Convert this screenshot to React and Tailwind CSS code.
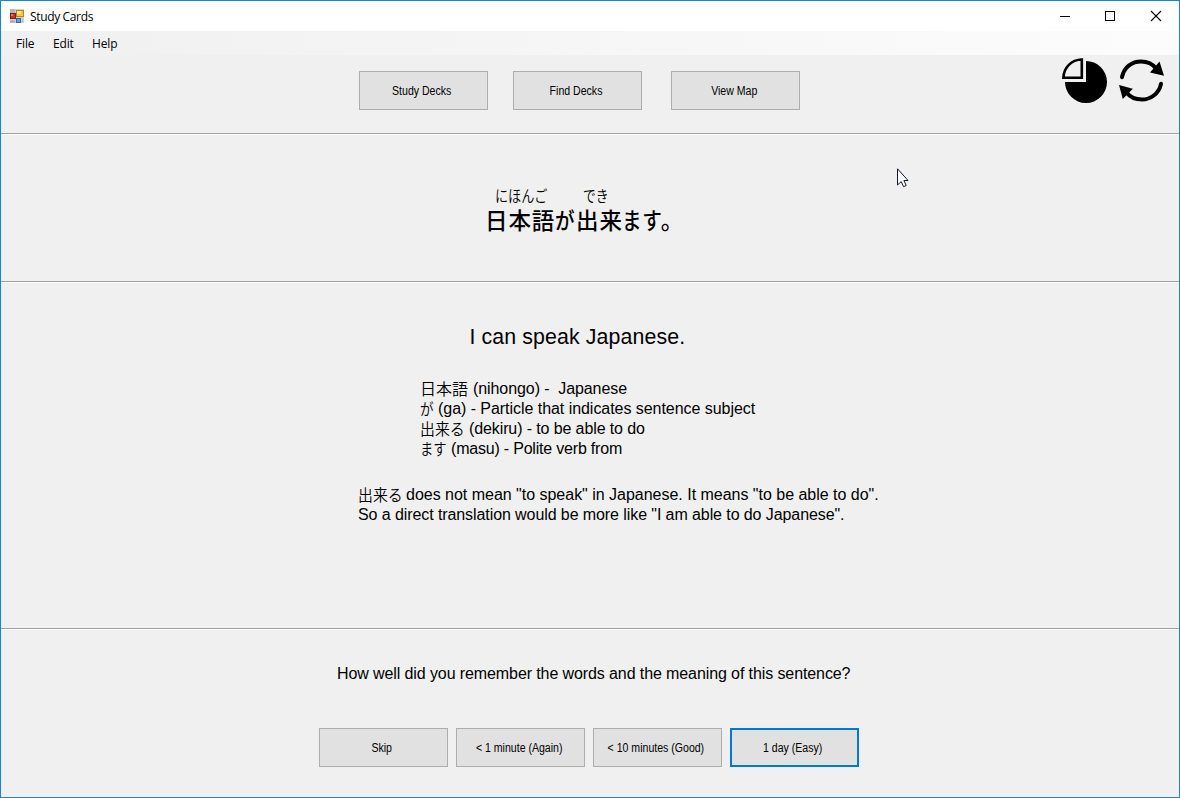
const SANS = "font-['Liberation_Sans','Noto_Sans_CJK_JP',sans-serif]";
const JP = "font-['Noto_Sans_CJK_JP','Liberation_Sans',sans-serif]";

function AppIcon() {
  return (
    <svg width="14" height="14" viewBox="0 0 14 14" className="shrink-0">
      <rect width="14" height="14" fill="#d0d0d0" />
      <path d="M0 4V0H5V4M0 11H5V14H0ZM13 9V13H12" fill="#b4b4b4" />
      <rect x="0.5" y="4.5" width="5" height="5" fill="#c8342c" stroke="#8d1712" />
      <rect x="1" y="5" width="2" height="2" fill="#e57368" />
      <rect x="6.5" y="1.5" width="7" height="6" fill="#f8c83c" stroke="#b8860f" />
      <rect x="7" y="2" width="4" height="3" fill="#ffe793" />
      <rect x="6.5" y="9.5" width="4" height="4" fill="#6d9ae0" stroke="#3565b5" />
    </svg>
  );
}

function TitleBar() {
  return (
    <header className="flex h-[30px] shrink-0 items-center bg-white pl-[9px]">
      <AppIcon />
      <span className="ml-[6px] whitespace-nowrap pt-[2px] font-['Open_Sans',sans-serif] text-[12px] leading-[16px] tracking-[-0.35px] text-black">
        Study Cards
      </span>
      <svg width="104" height="12" viewBox="0 0 104 12" fill="none" stroke="#000" className="ml-auto mr-[16px]" shapeRendering="crispEdges">
        <path d="M1 6.5H11" />
        <rect x="46.5" y="1.5" width="9" height="9" />
        <path d="M92 1L102 11M102 1L92 11" shapeRendering="auto" strokeWidth="1.1" />
      </svg>
    </header>
  );
}

function MenuBar() {
  return (
    <nav className="flex h-6 shrink-0 items-center bg-linear-to-r from-[#f0f0f0] to-[#fcfcfc] pl-[15px] pt-[2px] font-['Open_Sans',sans-serif] text-[12px] tracking-[-0.15px] text-black">
      <span className="w-[37px]">File</span>
      <span className="w-[39px]">Edit</span>
      <span>Help</span>
    </nav>
  );
}

function Button({ children, focused, className = "" }) {
  return (
    <button
      className={`flex h-[39px] w-[129px] shrink-0 items-center justify-center whitespace-pre bg-[#e1e1e1] pr-[3px] pt-px text-[12px] ${SANS} text-black ${
        focused ? "border-2 border-[#0078d7]" : "border border-[#adadad]"
      } ${className}`}
    >
      <span className="block scale-x-[0.88]">{children}</span>
    </button>
  );
}

function PieIcon() {
  return (
    <svg width="46" height="46" viewBox="0 0 46 46">
      <path d="M24 3V24H3A21 21 0 1 0 24 3Z" fill="#000" />
      <path d="M21.8 0V21.8H0Z" fill="#f0f0f0" />
      <path d="M19.8 1.5V19.8H1.4C1.7 9.5 9.5 1.7 19.8 1.5Z" fill="#f0f0f0" stroke="#000" strokeWidth="2.6" />
    </svg>
  );
}

function RefreshIcon() {
  return (
    <svg width="46" height="46" viewBox="0 0 46 46" fill="none" stroke="#000" strokeWidth="4" strokeLinecap="round">
      <path d="M4 19.2C6 8.5 14.5 3.4 23 3.4C30 3.4 35 6.2 38 10.5" />
      <path d="M43 25.8C41 36 32 41.5 24 41.5C17 41.5 12 39 8.5 34.5" />
      <path d="M41.5 3.5L46 17.8L32 14.6ZM1 27L14.8 30.7L4.8 41Z" fill="#000" stroke="none" />
    </svg>
  );
}

function Cursor() {
  return (
    <svg width="13" height="20" viewBox="0 0 13 20" className="absolute left-[895px] top-[34px]">
      <path d="M1.5 .8V17L5.2 13.6L7.6 18.7L10.2 17.5L7.9 12.5H12Z" fill="#fff" stroke="#111827" strokeWidth="1" />
    </svg>
  );
}

function Word({ jp, w, scale, children, spacing }) {
  return (
    <div className="flex h-5 items-center whitespace-pre text-base leading-5">
      <span className={`flex h-5 shrink-0 items-center pb-[3px] leading-4 ${w}`}>
        <span className={`block origin-left font-[350] leading-4 ${JP} ${scale}`}>{jp}</span>
      </span>
      <span className={spacing}>{children}</span>
    </div>
  );
}

export default function App() {
  return (
    <div className={`flex h-[798px] w-[1180px] flex-col overflow-hidden border border-[#1883d7] bg-[#f0f0f0] text-black ${SANS}`}>
      <TitleBar />
      <MenuBar />
      <section className="flex h-[78px] shrink-0 items-start pl-[358px]">
        <Button className="mt-4">Study Decks</Button>
        <Button className="ml-[25px] mt-4">Find Decks</Button>
        <Button className="ml-[29px] mt-4">View Map</Button>
        <div className="ml-auto mr-[15px] mt-[3px] flex gap-[10px]">
          <PieIcon />
          <RefreshIcon />
        </div>
      </section>

      <section className={`relative h-[148px] shrink-0 border-t border-[#a0a0a0] pl-[484px] pt-[53px] shadow-[inset_0_1px_0_#fff] ${JP}`}>
        <div className="flex h-[16px] whitespace-pre pl-[10px] text-base font-[350] leading-[16px]">
          <span className="w-[88px]">
            <span className="block w-16 origin-left scale-x-[0.82]">にほんご</span>
          </span>
          <span className="block origin-left scale-x-[0.8]">でき</span>
        </div>
        <div className="mt-[4px] flex h-[24px] whitespace-pre text-[22.5px] font-medium leading-[24px] tracking-[0.9px]">
          <span className="w-[70px]">日本語</span>
          <span className="w-[21px]"><span className="block origin-left scale-x-[0.87]">が</span></span>
          <span className="w-[46px]">出来</span>
          <span className="block origin-left scale-x-[0.87]">ます</span>
          <span className="-ml-[8px]">。</span>
        </div>
        <Cursor />
      </section>

      <section className="h-[347px] shrink-0 border-t border-[#a0a0a0] pt-[42px] shadow-[inset_0_1px_0_#fff]">
        <h1 className="h-[26px] whitespace-pre pl-[468.5px] text-[21.33px] leading-[26px] tracking-[0.11px]">I can speak Japanese.</h1>
        <div className="mt-[29px] pl-[419px]">
          <Word jp="日本語" w="w-[53px]" scale="" spacing="tracking-[-0.08px]">(nihongo) -  Japanese</Word>
          <Word jp="が" w="w-[18px]" scale="scale-x-[0.85]" spacing="tracking-[-0.045px]">(ga) - Particle that indicates sentence subject</Word>
          <Word jp="出来る" w="w-[49px]" scale="scale-x-[0.93]" spacing="tracking-[-0.11px]">(dekiru) - to be able to do</Word>
          <Word jp="ます" w="w-[31px]" scale="scale-x-[0.83]" spacing="tracking-[-0.2px]">(masu) - Polite verb from</Word>
        </div>
        <div className="mt-[26px] pl-[357px]">
          <Word jp="出来る" w="w-[48px]" scale="scale-x-[0.93]" spacing="tracking-[-0.015px]">does not mean "to speak" in Japanese. It means "to be able to do".</Word>
          <p className="h-5 whitespace-pre text-base leading-5 tracking-[-0.087px]">So a direct translation would be more like "I am able to do Japanese".</p>
        </div>
      </section>

      <section className="grow border-t border-[#a0a0a0] pt-[35px] shadow-[inset_0_1px_0_#fff]">
        <p className="h-5 whitespace-pre pl-[336px] text-base leading-5 tracking-[-0.1px]">How well did you remember the words and the meaning of this sentence?</p>
        <div className="mt-[44px] flex gap-2 pl-[318px]">
          <Button>Skip</Button>
          <Button>{"< 1 minute (Again)"}</Button>
          <Button>{"< 10 minutes (Good)"}</Button>
          <Button focused>1 day (Easy)</Button>
        </div>
      </section>
    </div>
  );
}
